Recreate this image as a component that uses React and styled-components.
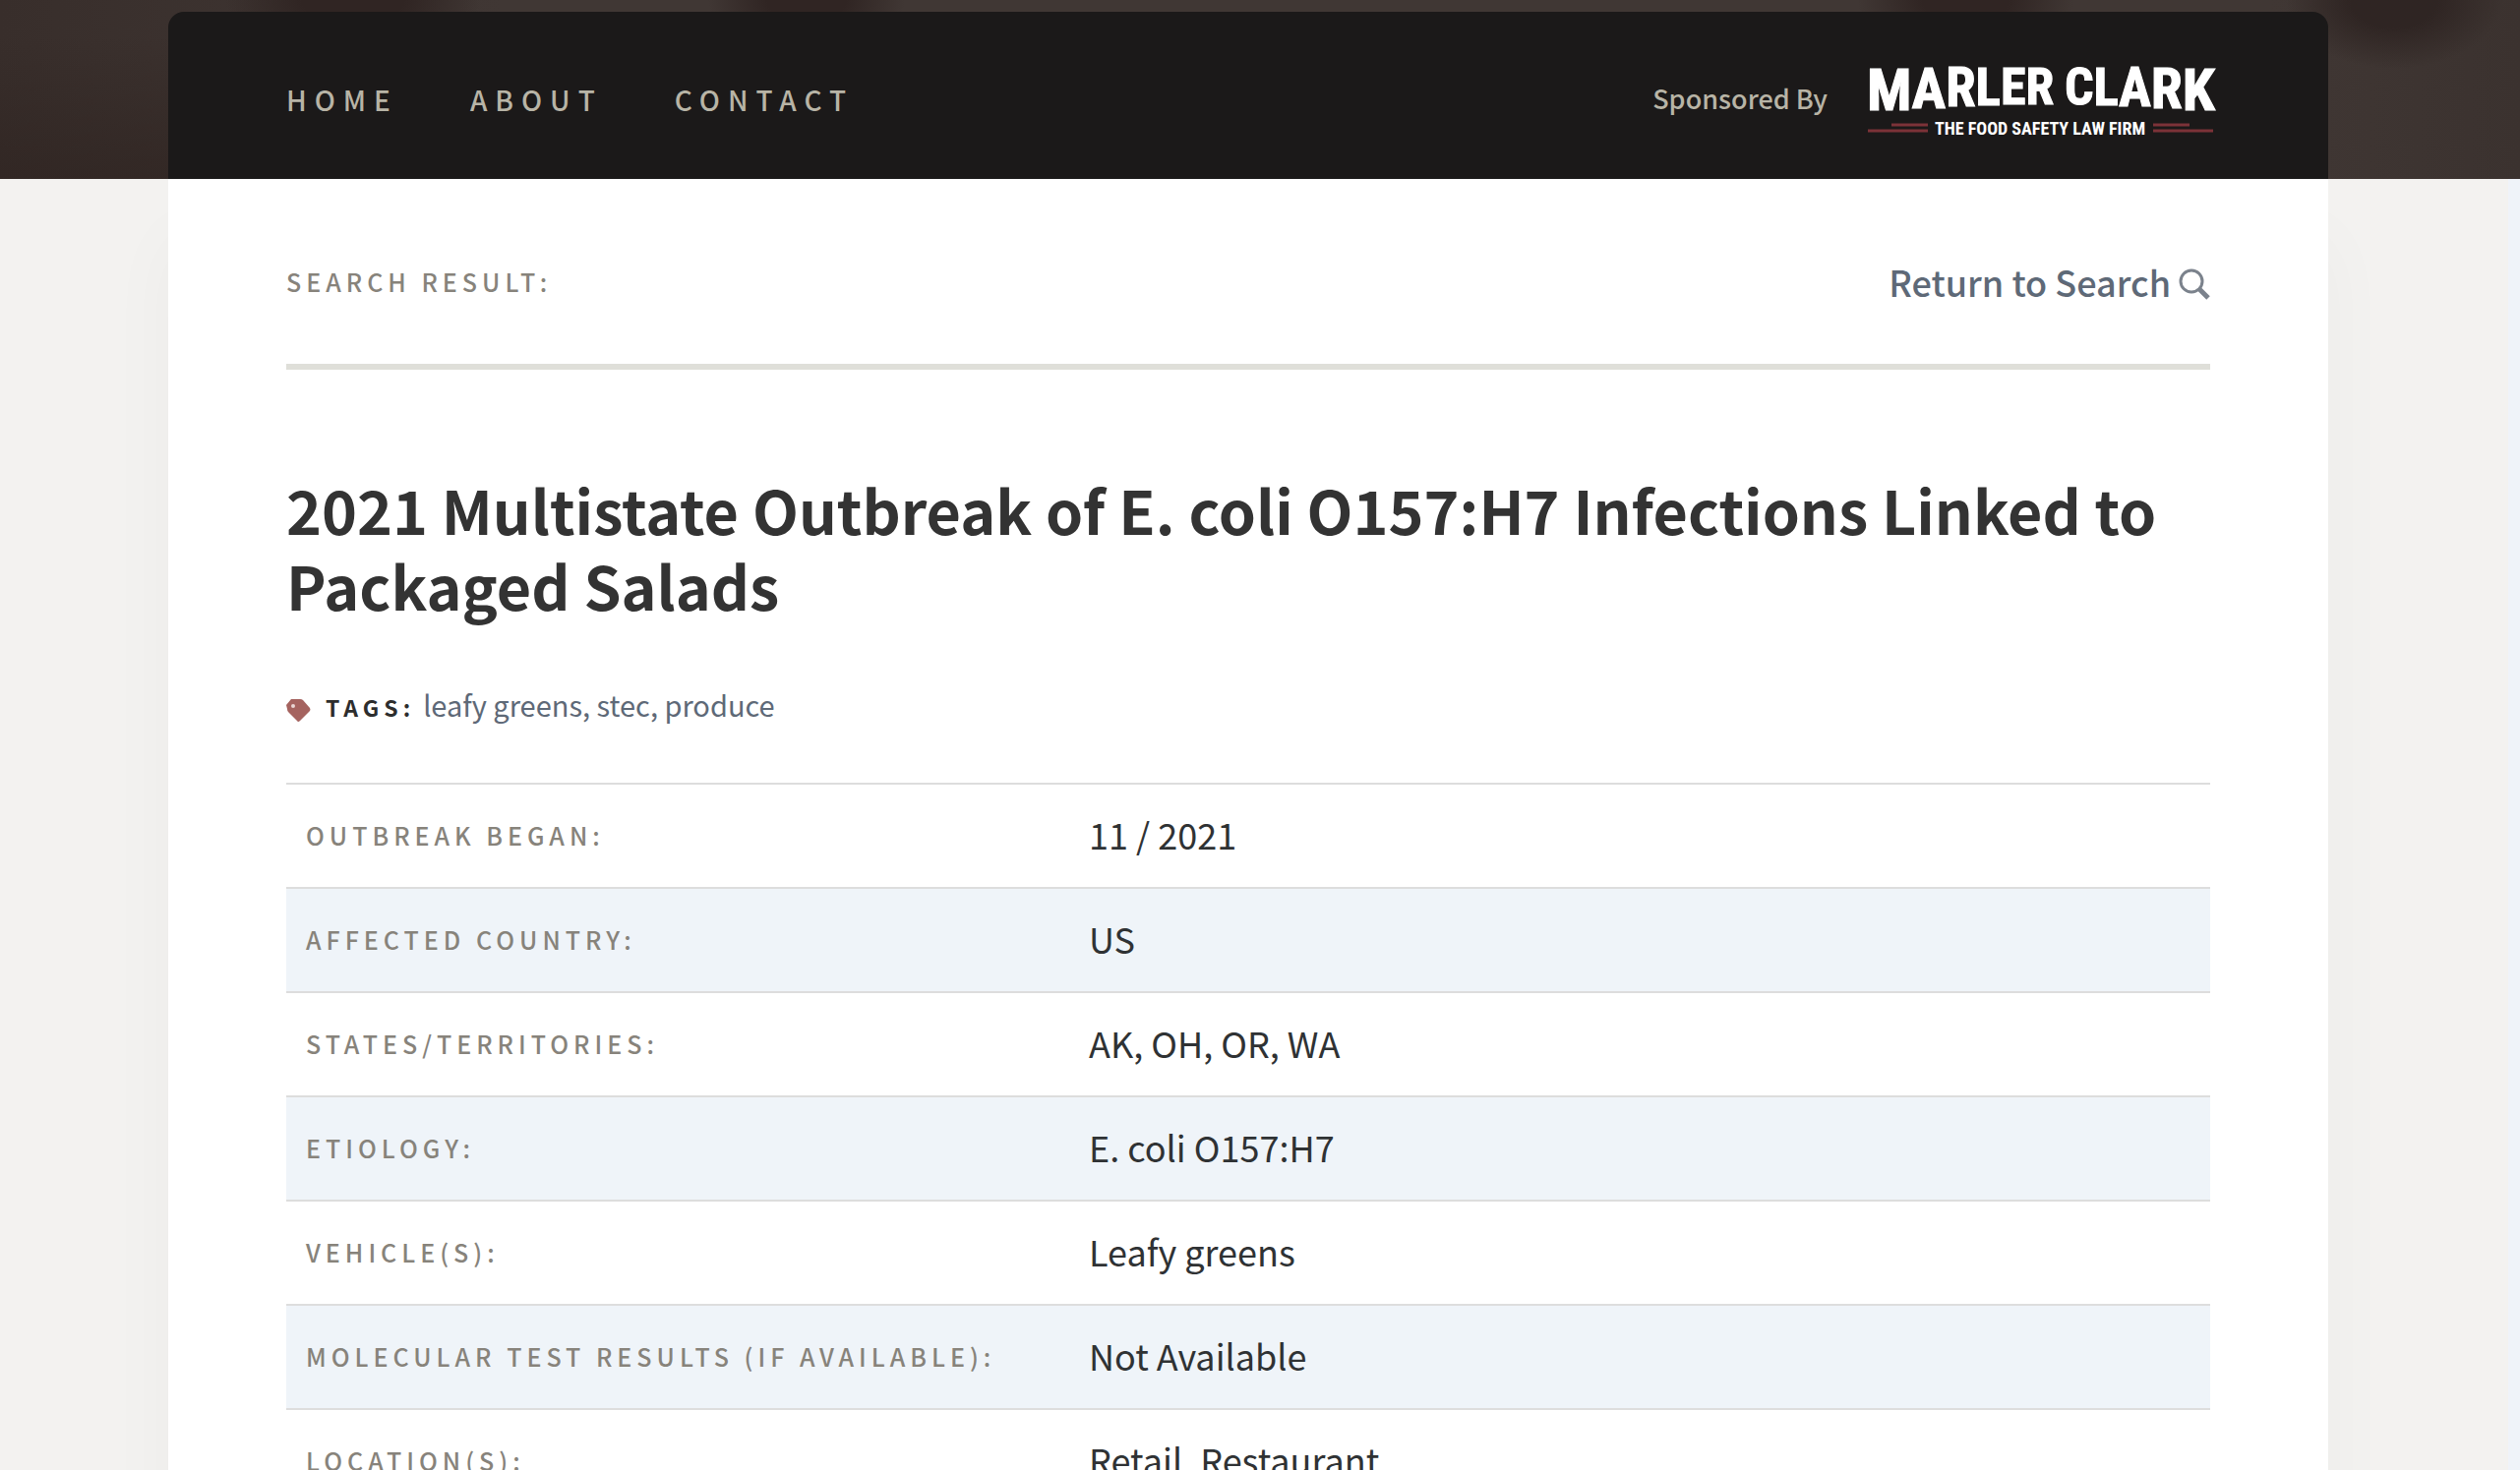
import React from "react";
import styled, { createGlobalStyle } from "styled-components";

const GlobalStyle = createGlobalStyle`
  * {
    box-sizing: border-box;
  }

  body {
    margin: 0;
    background: #f3f2f0;
    color: #333333;
    font-family: "Noto Sans CJK JP", "Noto Sans CJK SC", "Noto Sans", sans-serif;
  }

  a {
    color: inherit;
    text-decoration: none;
  }
`;

const Page = styled.div`
  height: 100vh;
  overflow: hidden;
  display: flex;
  flex-direction: column;
`;

const Banner = styled.div`
  flex: none;
  padding: 12px 195px 0 171px;
  background:
    radial-gradient(ellipse 110px 70px at 95% 0, #2f2523 40%, transparent),
    radial-gradient(ellipse 130px 60px at 14% 0, #302523 40%, transparent),
    radial-gradient(ellipse 100px 60px at 32% 0, #302523 40%, transparent),
    radial-gradient(ellipse 110px 60px at 78% 0, #302523 40%, transparent),
    linear-gradient(to top, rgba(47, 36, 33, 0.7), transparent 80%) left / 171px 100% no-repeat,
    linear-gradient(to right, #382e2b, #403734 20%, #403734 90%, #3b322f);
`;

const Masthead = styled.header`
  height: 170px;
  padding: 8px 117px 0 120px;
  border-radius: 16px 16px 0 0;
  background: #1b1919;
  color: #b8b4a6;
  display: flex;
  align-items: center;
  justify-content: space-between;
`;

const Nav = styled.nav`
  display: flex;
  gap: 73px;
`;

const NavLink = styled.a`
  font-size: 28px;
  font-weight: 500;
  letter-spacing: 8px;
  text-transform: uppercase;
`;

const Sponsor = styled.div`
  display: flex;
  align-items: center;
  gap: 41px;
  font-size: 27px;
  font-weight: 500;
`;

const SponsorText = styled.span`
  padding-bottom: 4px;
`;

const LogoSvg = styled.svg`
  display: block;
  width: 351px;
  height: 92px;
  overflow: visible;
`;

const Body = styled.div`
  flex: 1;
  padding: 0 183px 0 171px;
  border-right: 12px solid #eff3f9;
  overflow: hidden;
`;

const Sheet = styled.main`
  min-height: 100%;
  padding: 70px 120px;
  background: #ffffff;
  box-shadow: 0 60px 70px rgba(40, 20, 40, 0.03);
`;

const ResultBar = styled.div`
  height: 124px;
  padding-bottom: 51px;
  border-bottom: 6px solid #dfdfd9;
  display: flex;
  align-items: center;
  justify-content: space-between;
`;

const ResultLabel = styled.span`
  color: #87837b;
  font-size: 25px;
  font-weight: 500;
  letter-spacing: 5px;
  text-transform: uppercase;
`;

const ReturnLink = styled.a`
  display: flex;
  align-items: center;
  gap: 8px;
  color: #5e6977;
  font-size: 36px;
  font-weight: 500;

  svg {
    margin-top: 6px;
  }
`;

const Title = styled.h1`
  margin: 103px 0 59px;
  font-size: 61px;
  font-weight: 700;
  line-height: 77px;
`;

const Tags = styled.div`
  margin-bottom: 53px;
  display: flex;
  align-items: baseline;
  color: #5e6977;
  font-size: 29px;
  line-height: 48px;

  svg {
    align-self: center;
    margin: 10px 15px 0 0;
  }
`;

const TagsLabel = styled.span`
  margin-right: 8px;
  color: #2d2d2d;
  font-size: 23px;
  font-weight: 700;
  letter-spacing: 5px;
`;

const Table = styled.table`
  width: 100%;
  border-collapse: separate;
  border-spacing: 0;
`;

const Row = styled.tr`
  background: ${(props) => (props.$shaded ? "#eff4f9" : "#ffffff")};
`;

const Label = styled.th`
  width: 796px;
  height: 106px;
  padding: 0 20px 2px;
  border-top: 2px solid #dddddd;
  color: #87837b;
  font-size: 25px;
  font-weight: 500;
  letter-spacing: 5px;
  text-align: left;
  text-transform: uppercase;
`;

const Value = styled.td`
  padding: 0 20px 4px;
  border-top: 2px solid #dddddd;
  color: #2f3234;
  font-size: 36px;
`;

const rows = [
  ["Outbreak Began:", "11 / 2021"],
  ["Affected Country:", "US"],
  ["States/Territories:", "AK, OH, OR, WA"],
  ["Etiology:", "E. coli O157:H7"],
  ["Vehicle(s):", "Leafy greens"],
  ["Molecular Test Results (if available):", "Not Available"],
  ["Location(s):", "Retail, Restaurant"],
];

const tags = ["leafy greens", "stec", "produce"];

// the wordmark has a straight top and an arched bottom, so each letter has its own size
const wordmark = [
  ["M", 60],
  ["A", 58],
  ["R", 55],
  ["L", 53],
  ["E", 52],
  ["R", 52],
  ["\u00a0", 46],
  ["C", 52],
  ["L", 53],
  ["A", 55],
  ["R", 58],
  ["K", 60],
];

function Logo() {
  return (
    <LogoSvg viewBox="0 0 351 92" role="img" aria-label="Marler Clark, The Food Safety Law Firm">
      <g
        fill="#ffffff"
        fontFamily='"Roboto Condensed", "Liberation Sans Narrow", "DejaVu Sans Condensed", sans-serif'
        fontWeight="700"
      >
        <text x="-1" stroke="#ffffff" strokeWidth="1">
          {wordmark.map(([letter, size], i) => (
            <tspan key={i} y={14 + Math.round(size * 0.71)} fontSize={size}>
              {letter}
            </tspan>
          ))}
        </text>
        <text x="175" y="82" fontSize="18" textAnchor="middle">
          THE FOOD SAFETY LAW FIRM
        </text>
      </g>
      <path
        d="M24 72H61M0 78H61M290 72H327M290 78H351"
        stroke="#7c3238"
        strokeWidth="3"
      />
    </LogoSvg>
  );
}

function SearchIcon() {
  return (
    <svg width="32" height="32" viewBox="0 0 32 32" fill="none" stroke="#7b828c">
      <circle cx="13" cy="13" r="11" strokeWidth="3" />
      <path d="M21 21L30 30" strokeWidth="5" />
    </svg>
  );
}

function TagIcon() {
  return (
    <svg width="25" height="25" viewBox="0 0 25 25">
      <path d="M5 1H14Q16 1 17 2L24 10Q25 12 24 13L14 23Q12 25 11 23L2 14Q1 13 1 11L0 7Z" fill="#a5635f" />
      <circle cx="7" cy="8" r="2" fill="#ead6d4" />
    </svg>
  );
}

function App() {
  return (
    <Page>
      <GlobalStyle />
      <Banner>
        <Masthead>
          <Nav>
            <NavLink href="#home">Home</NavLink>
            <NavLink href="#about">About</NavLink>
            <NavLink href="#contact">Contact</NavLink>
          </Nav>
          <Sponsor>
            <SponsorText>Sponsored By</SponsorText>
            <a href="#sponsor">
              <Logo />
            </a>
          </Sponsor>
        </Masthead>
      </Banner>
      <Body>
        <Sheet>
          <ResultBar>
            <ResultLabel>Search Result:</ResultLabel>
            <ReturnLink href="#search">
              Return to Search
              <SearchIcon />
            </ReturnLink>
          </ResultBar>
          <Title>
            2021 Multistate Outbreak of E. coli O157:H7 Infections Linked to Packaged Salads
          </Title>
          <Tags>
            <TagIcon />
            <TagsLabel>TAGS:</TagsLabel>
            <span>
              {tags.map((tag, i) => (
                <React.Fragment key={tag}>
                  {i > 0 && ", "}
                  <a href="#tag">{tag}</a>
                </React.Fragment>
              ))}
            </span>
          </Tags>
          <Table>
            <tbody>
              {rows.map(([label, value], i) => (
                <Row key={label} $shaded={i % 2 === 1}>
                  <Label scope="row">{label}</Label>
                  <Value>{value}</Value>
                </Row>
              ))}
            </tbody>
          </Table>
        </Sheet>
      </Body>
    </Page>
  );
}

export default App;
